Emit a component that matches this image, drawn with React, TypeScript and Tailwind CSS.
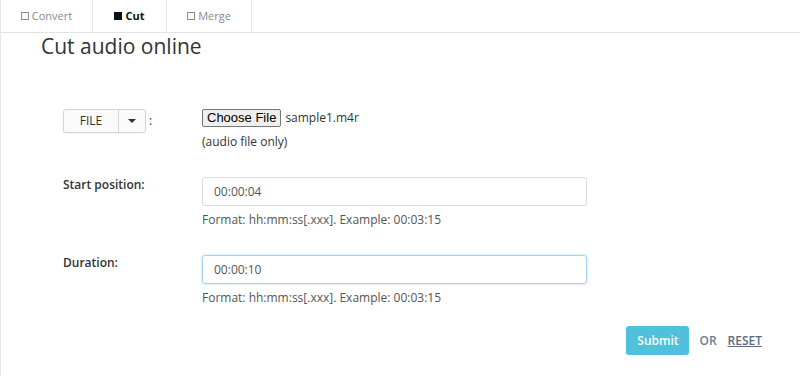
import { useState } from 'react';

const tabs = [
  { name: 'Convert', w: 'w-[92px]' },
  { name: 'Cut', w: 'w-[74px]' },
  { name: 'Merge', w: 'w-[85px]' },
];

export default function App() {
  const [start, setStart] = useState('00:00:04');
  const [duration, setDuration] = useState('00:00:10');
  const active = 'Cut';

  return (
    <div className="w-[800px] h-[376px] bg-white border-l border-[#e6e6e6] font-['Open_Sans',sans-serif] text-[#333] overflow-hidden">
      <div className="flex h-[33px] border-b border-[#e3e3e3]">
        {tabs.map(t => (
          <div key={t.name}
            className={`${t.w} flex items-center justify-center gap-[3px] border-r border-[#e6e6e6] text-[11px] ${t.name === active ? 'font-bold text-[#111]' : 'text-[#8a8a8a]'}`}>
            <span className={`inline-block w-[8px] h-[8px] ${t.name === active ? 'bg-[#111]' : 'border border-[#8a8a8a]'}`} />
            {t.name}
          </div>
        ))}
      </div>

      <h1 className="pl-[40px] text-[21px] leading-[26px] text-[#333]">Cut audio online</h1>

      <div className="pl-[62px] mt-[50px]">
        <div className="grid grid-cols-[139px_385px]">
          <div className="flex items-start">
            <div className="flex h-[24px] border border-[#d4d4d4] rounded-[3px] bg-[#fafafa] shadow-[0_1px_1px_rgba(0,0,0,0.04)]">
              <div className="w-[55px] flex items-center justify-center text-[12px] text-[#333] border-r border-[#d4d4d4]">FILE</div>
              <div className="w-[26px] flex items-center justify-center">
                <span className="w-0 h-0 border-l-[4px] border-r-[4px] border-t-[4px] border-l-transparent border-r-transparent border-t-[#333]" />
              </div>
            </div>
            <span className="ml-[3px] text-[12px] leading-[24px]">:</span>
          </div>
          <div>
            <div className="flex items-center h-[18px]">
              <button className="h-[18px] px-[4px] border border-[#767676] rounded-[2px] bg-[#efefef] text-[13px] leading-[16px] text-black font-['Liberation_Sans',sans-serif]">Choose File</button>
              <span className="ml-[4px] text-[12px] text-[#333]">sample1.m4r</span>
            </div>
            <p className="mt-[6px] text-[12px] leading-[17px] text-[#333]">(audio file only)</p>
          </div>
        </div>

        <div className="grid grid-cols-[139px_385px] mt-[27px]">
          <label className="text-[12px] leading-[16px] font-semibold text-[#333]">Start position:</label>
          <div>
            <input value={start} onChange={e => setStart(e.target.value)}
              className="w-[385px] h-[29px] px-[11px] border border-[#d9d9d9] rounded-[3px] text-[12px] text-[#555] outline-none" />
            <p className="mt-[5px] text-[12px] leading-[17px] text-[#555]">Format: hh:mm:ss[.xxx]. Example: 00:03:15</p>
          </div>
        </div>

        <div className="grid grid-cols-[139px_385px] mt-[27px]">
          <label className="text-[12px] leading-[16px] font-semibold text-[#333]">Duration:</label>
          <div>
            <input value={duration} onChange={e => setDuration(e.target.value)}
              className="w-[385px] h-[29px] px-[11px] border border-[#a6d2ee] rounded-[3px] text-[12px] text-[#555] outline-none shadow-[0_0_3px_rgba(102,175,233,0.45)]" />
            <p className="mt-[5px] text-[12px] leading-[17px] text-[#555]">Format: hh:mm:ss[.xxx]. Example: 00:03:15</p>
          </div>
        </div>
      </div>

      <div className="flex items-center justify-end pr-[38px] mt-[20px]">
        <button className="w-[63px] h-[29px] rounded-[3px] bg-[#4fc1dc] text-white text-[12px] font-semibold">Submit</button>
        <span className="ml-[10px] text-[12px] font-semibold text-[#6f7d8f]">OR</span>
        <a href="#" className="ml-[11px] text-[12px] font-semibold text-[#5c6b80] underline">RESET</a>
      </div>
    </div>
  );
}
